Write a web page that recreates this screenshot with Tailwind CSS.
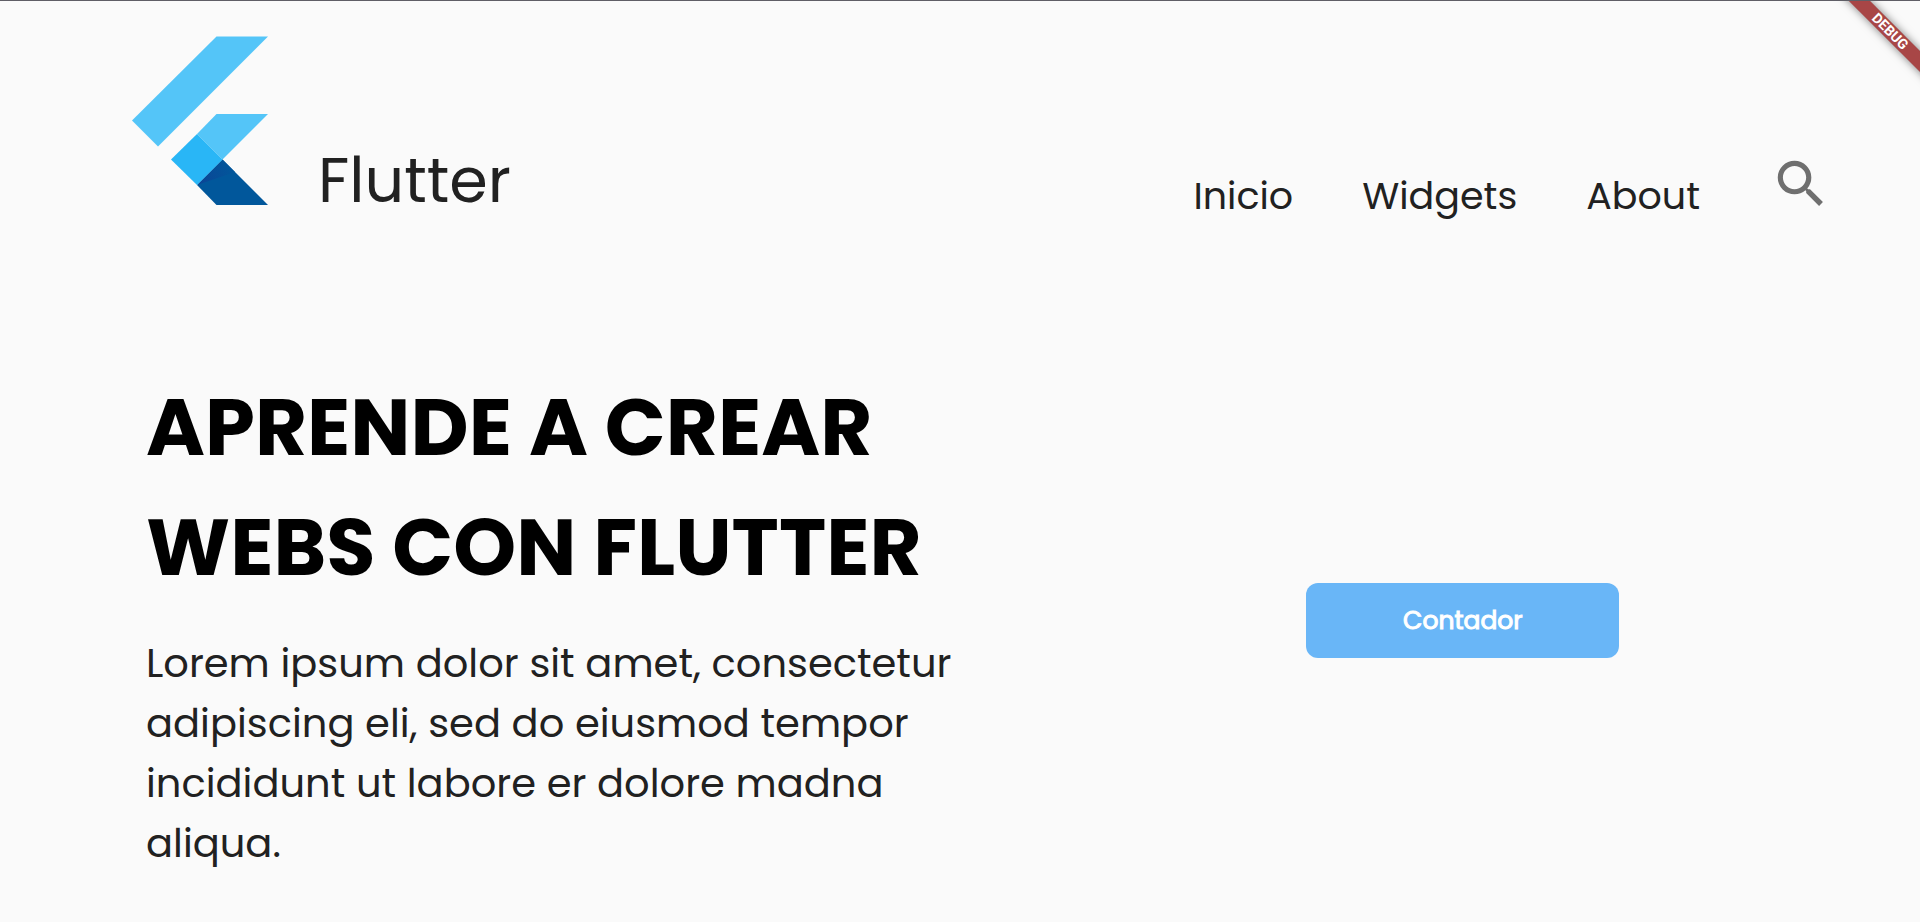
<!DOCTYPE html>
<html lang="es">
<head>
<meta charset="utf-8">
<meta name="viewport" content="width=device-width, initial-scale=1">
<title>Flutter</title>
<script src="https://cdn.jsdelivr.net/npm/@tailwindcss/browser@4"></script>
</head>
<body class="relative min-h-screen overflow-x-hidden border-t border-[#5f5e66] bg-[#fafafa] font-['Poppins','Inter',sans-serif] text-[#212121]">
  <header class="flex items-start justify-between pt-[35px] pr-[88px] pl-[132px]">
    <a href="#" class="flex items-end gap-[50px]">
      <svg class="h-[169px] w-[136px]" viewBox="0 0 136 169" aria-hidden="true">
        <defs>
          <linearGradient id="fold" x1="68" y1="149" x2="103" y2="132" gradientUnits="userSpaceOnUse">
            <stop offset="0" stop-color="#0b4596"/>
            <stop offset="1" stop-color="#01579b"/>
          </linearGradient>
        </defs>
        <path fill="#54c5f8" d="M84.500 .5H136L26 110.500 0 84.500z"/>
        <path fill="#54c5f8" d="M84.500 78H136L90.500 123.500 65 98z"/>
        <path fill="#01579b" d="M90.500 123.500L136 169H84.500L65 149z"/>
        <path fill="url(#fold)" d="M90.500 123.500L103 136 65 149z"/>
        <path fill="#29b6f6" d="M65 98L90.500 123.500 65 149 39 123.500z"/>
      </svg>
      <span class="text-[62px] leading-[48px]">Flutter</span>
    </a>
    <div class="flex items-start gap-[70px] pt-[117px]">
      <nav class="flex gap-[69px] pt-[19px] text-[38px] leading-[48px]">
        <a href="#">Inicio</a>
        <a href="#">Widgets</a>
        <a href="#">About</a>
      </nav>
      <button type="button" aria-label="Buscar" class="text-[#6f6f6f]">
        <svg class="size-[62px]" viewBox="0 0 24 24" fill="currentColor" aria-hidden="true"><path d="M15.500 14h-.79l-.28-.27A6.471 6.471 0 0 0 16 9.500 6.500 6.500 0 1 0 9.500 16c1.610 0 3.090-.59 4.230-1.570l.27.28v.79l5 4.990L20.490 19l-4.990-5zm-6 0C7.010 14 5 11.990 5 9.500S7.010 5 9.500 5 14 7.010 14 9.500 11.990 14 9.500 14z"/></svg>
      </button>
    </div>
  </header>
  <main class="grid grid-cols-[11fr_10fr] pt-[147px]">
    <section class="pl-[146px]">
      <h1 class="text-[80px] leading-[120px] font-bold whitespace-nowrap text-black">APRENDE A CREAR<br>WEBS CON FLUTTER</h1>
      <p class="pt-[26px] text-[40px] leading-[60px] whitespace-nowrap">Lorem ipsum dolor sit amet, consectetur<br>adipiscing eli, sed do eiusmod tempor<br>incididunt ut labore er dolore madna<br>aliqua.</p>
    </section>
    <div class="flex justify-center pt-[216px]">
      <button type="button" class="h-[75px] w-[313px] rounded-xl bg-[#69b6f7] text-[25px] text-white [-webkit-text-stroke:1px_white]">Contador</button>
    </div>
  </main>
  <div class="pointer-events-none absolute top-0 right-0 size-[100px] overflow-hidden">
    <div class="absolute top-[23px] right-[-50px] w-[160px] rotate-45 bg-[#a84646] text-center font-['Roboto',sans-serif] text-[14px] leading-[15px] font-bold text-white shadow-[0_0_8px_rgba(0,0,0,0.5)]">DEBUG</div>
  </div>
</body>
</html>
